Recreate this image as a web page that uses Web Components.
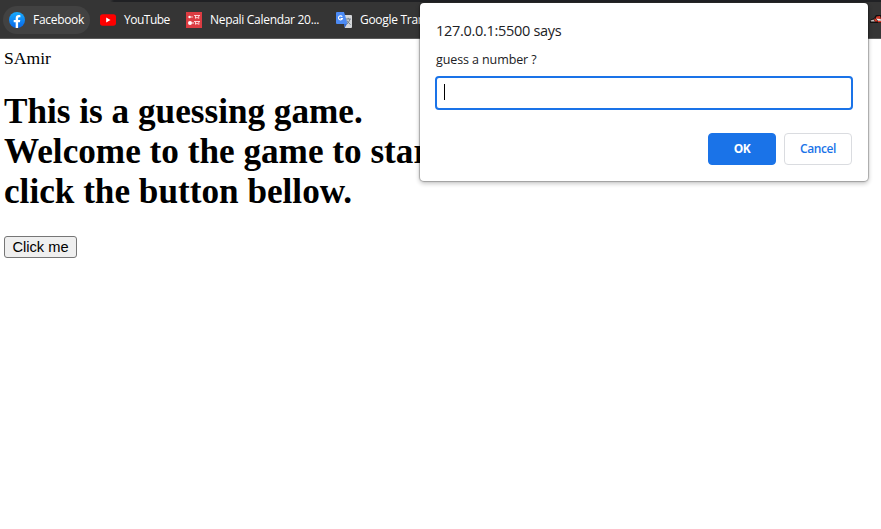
<!DOCTYPE html>
<html lang="en">
<head>
<meta charset="utf-8">
<title>Guessing game</title>
<style>
html,body{margin:0;height:100%;background:#fff;overflow:hidden}
body{position:relative}
</style>
</head>
<body>
<bookmark-bar>
  <bookmark-item active style="width:87px;--ls:-.3px">
    <svg slot="icon" width="16" height="16" viewBox="0 0 16 16"><defs><linearGradient id="f" x1="0" y1="0" x2="0" y2="1"><stop offset="0" stop-color="#18acfe"/><stop offset="1" stop-color="#0866e8"/></linearGradient></defs><circle cx="8" cy="8" r="8" fill="url(#f)"/><path d="M6.7 15.9V10.3H4.7V8h2V6.3c0-2.1 1.2-3.2 3-3.2.6 0 1.2.1 1.7.2v1.9h-1c-1 0-1.3.6-1.3 1.3V8h2.2l-.4 2.3H9.1v5.6z" fill="#fff"/></svg>Facebook</bookmark-item>
  <bookmark-item style="width:82px;margin-left:4px;--ls:-.5px">
    <svg slot="icon" width="16" height="16" viewBox="0 0 16 16"><rect y="2.2" width="16" height="11.6" rx="2.7" fill="#f00"/><path d="M6.2 5.6v4.8L10.5 8z" fill="#fff"/></svg>YouTube</bookmark-item>
  <bookmark-item style="width:146px;margin-left:4px;--ls:-.3px">
    <svg slot="icon" width="16" height="16" viewBox="0 0 16 16"><path d="M0 0h16v16H0z" fill="#dc3c42"/><g fill="#fff"><circle cx="3.6" cy="5" r="1.3"/><circle cx="6" cy="5" r=".7"/><circle cx="4" cy="11" r="2"/><circle cx="7" cy="11" r=".8"/></g><path d="M8 3.5h6M9.5 3.5v3M12.7 3.5v3.3M8 9.5h6M9.5 9.5v3M12.8 9.5v3.3M9 5.7h3M9 11.7h3" stroke="#ffe0e2" stroke-width=".9" fill="none"/></svg>Nepali Calendar 20...</bookmark-item>
  <bookmark-item style="width:126px;margin-left:4px;--ls:-.3px">
    <svg slot="icon" width="16" height="16" viewBox="0 0 16 16"><path d="M6 3h9q1 0 1 1v11q0 1-1 1H9z" fill="#d5d7da"/><path d="M8 12h3l-2.4 4z" fill="#3268cf"/><path d="M1 0h7l3.7 12H1q-1 0-1-1V1q0-1 1-1z" fill="#4c8bf5"/><path d="M6.2 4.8A2 2 0 1 0 6.4 6.5H4.6" fill="none" stroke="#fff" stroke-width="1.1"/><path d="M9.8 7h5M12.2 5.8V7M14 7q-.8 3-3.2 5M11 8.5q1.2 2.5 3.5 4" fill="none" stroke="#697786" stroke-width=".9"/></svg>Google Translate</bookmark-item>
  <bookmark-item style="width:40px;margin-left:405px;margin-top:-1px">
    <svg slot="icon" width="16" height="16" viewBox="0 0 16 16"><path d="M3 9l4-2 2-3h7v8H3z" fill="#111"/><path d="M9.5 5.5L13 5l1 3h-3L8.5 7.5z" fill="#d33a29"/><path d="M3.5 9.5l3-1 1.5 2H4z" fill="#c9c0bc"/><path d="M7 7.5l2 .5 2 2.5H8z" fill="#e33a28"/><path d="M9 7.5l5 .8v1.5h-3z" fill="#f4f4f4"/><path d="M11 10h5v1.3h-5z" fill="#e33a28"/></svg></bookmark-item>
</bookmark-bar>
<game-page>
  <span slot="name">SAmir</span>
  <span slot="title">This is a guessing game.<br>Welcome to the game to start<br>click the button bellow.</span>
  <span slot="action">Click me</span>
</game-page>
<prompt-dialog><span slot="origin">127.0.0.1:5500 says</span><span slot="message">guess a number ?</span></prompt-dialog>

<script>
const define = (name, html) => customElements.define(name, class extends HTMLElement {
  constructor(){ super(); this.attachShadow({mode:'open'}).innerHTML = html; }
});
define('bookmark-bar', `<style>
:host{display:flex;box-sizing:border-box;height:39px;padding:6px 0 0 3px;background:linear-gradient(to right,transparent 110px,#202124 114px) 0 0/100% 2px no-repeat,#353535;border-bottom:1px solid #5b5b5b;overflow:hidden}
</style><slot></slot>`);
define('bookmark-item', `<style>
:host{display:flex;flex:none;box-sizing:border-box;align-items:center;height:28px;padding-left:6px;gap:8px;border-radius:14px;color:#fff;font:12px/16px "Open Sans","Noto Sans",sans-serif;white-space:nowrap}
:host([active]){background:#424242}
::slotted(svg){display:block;flex:none}
.label{letter-spacing:var(--ls,0)}
</style><slot name="icon"></slot><span class="label"><slot></slot></span>`);
define('game-page', `<style>
:host{display:block;padding:9px 4px 0;color:#000;font:17.6px/20px "Liberation Serif",serif}
h1{margin:24px 0;font-size:35.2px;line-height:40px;white-space:nowrap}
button{display:block;box-sizing:border-box;width:73px;height:22px;padding:0;border:1px solid #767676;border-radius:3px;background:#efefef;color:#000;font:14.67px/18px "Liberation Sans",sans-serif}
</style><div><slot name="name"></slot></div><h1><slot name="title"></slot></h1><button><slot name="action"></slot></button>`);
define('prompt-dialog', `<style>
:host{position:absolute;left:420px;top:3px;box-sizing:border-box;width:448px;height:178px;padding:17px 16px 16px;display:flex;flex-direction:column;border-radius:4px;background:#fff;box-shadow:0 0 1px 1px rgba(0,0,0,.25),0 2px 4px 1px rgba(0,0,0,.2);color:#202124;font-family:"Open Sans","Noto Sans",sans-serif}
.origin{font-size:14.5px;line-height:22px;letter-spacing:-.3px}
.message{margin-top:9px;font-size:12.5px;line-height:17px;letter-spacing:-.1px}
.field{box-sizing:border-box;width:418px;height:34px;margin:8px 0 0 -1px;padding:6px 7px;border:2px solid #1a73e8;border-radius:4px;flex:none}
.caret{width:1px;height:16px;background:#000}
.actions{display:flex;justify-content:flex-end;gap:8px;margin-top:23px}
button{box-sizing:border-box;width:68px;height:32px;padding:0;border:1px solid #dadce0;border-radius:4px;background:#fff;color:#1a73e8;font:600 12px/16px "Open Sans",sans-serif;letter-spacing:-.4px}
.ok{background:#1a73e8;border-color:#1a73e8;color:#fff;font-weight:700}
</style><div class="origin"><slot name="origin"></slot></div><div class="message"><slot name="message"></slot></div><div class="field"><div class="caret"></div></div><div class="actions"><button class="ok">OK</button><button>Cancel</button></div>`);
</script>
</body>
</html>
